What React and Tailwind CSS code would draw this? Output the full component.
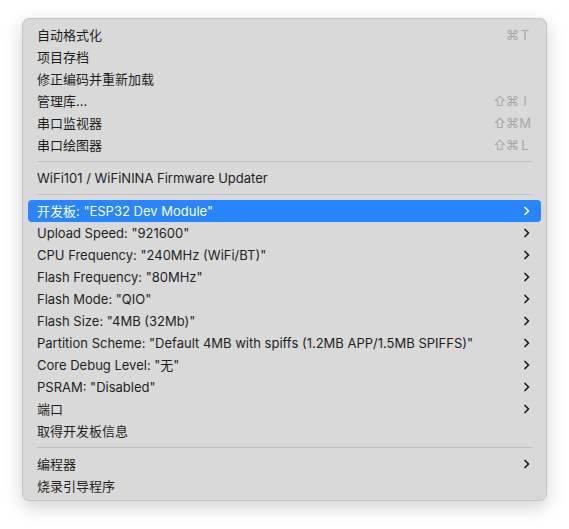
import React from 'react';

const font = { fontFamily: 'Inter, "Noto Sans CJK SC", sans-serif' };

function Chevron({ active }) {
  return (
    <svg width="8" height="10" viewBox="0 0 8 10" className={active ? 'text-white' : 'text-[#1a1a1a]'}>
      <path d="M2 1.5 L5.5 5 L2 8.5" fill="none" stroke="currentColor" strokeWidth="1.7" strokeLinecap="round" strokeLinejoin="round" />
    </svg>
  );
}

function Shortcut({ keys }) {
  return (
    <div className="flex items-center text-[13px] text-[#a6a6a6] leading-none">
      <span className="w-[13px] text-center">{keys.shift ? '⇧' : ''}</span>
      <span className="w-[13px] text-center">⌘</span>
      <span className="w-[12px] text-center">{keys.key}</span>
    </div>
  );
}

function Item({ label, shortcut, submenu, active }) {
  return (
    <div
      className={
        'h-[22px] flex items-center justify-between pl-[9px] pr-[10px] rounded-[4px] ' +
        (active ? 'bg-[#2785ff] text-white' : 'text-[#1f1f1f]')
      }
    >
      <span className="text-[13px] leading-none whitespace-nowrap">{label}</span>
      {shortcut && <Shortcut keys={shortcut} />}
      {submenu && <Chevron active={active} />}
    </div>
  );
}

function Separator() {
  return (
    <div className="h-[11px] flex items-center px-[9px]">
      <div className="h-px w-full bg-[#bfbfbf]" />
    </div>
  );
}

export default function App() {
  const boardItems = [
    ['开发板: "ESP32 Dev Module"', true],
    ['Upload Speed: "921600"'],
    ['CPU Frequency: "240MHz (WiFi/BT)"'],
    ['Flash Frequency: "80MHz"'],
    ['Flash Mode: "QIO"'],
    ['Flash Size: "4MB (32Mb)"'],
    ['Partition Scheme: "Default 4MB with spiffs (1.2MB APP/1.5MB SPIFFS)"'],
    ['Core Debug Level: "无"'],
    ['PSRAM: "Disabled"'],
    ['端口'],
  ];

  return (
    <div className="w-[569px] h-[529px] bg-white pt-[18px] pl-[22px]" style={font}>
      <div className="w-[525px] h-[483px] bg-[#d9d9d9] rounded-[7px] border border-[#c4c4c4] shadow-[0_6px_18px_rgba(0,0,0,0.18)] px-[5px] pt-[5px]">
        <Item label="自动格式化" shortcut={{ key: 'T' }} />
        <Item label="项目存档" />
        <Item label="修正编码并重新加载" />
        <Item label="管理库..." shortcut={{ shift: true, key: 'I' }} />
        <Item label="串口监视器" shortcut={{ shift: true, key: 'M' }} />
        <Item label="串口绘图器" shortcut={{ shift: true, key: 'L' }} />
        <Separator />
        <Item label="WiFi101 / WiFiNINA Firmware Updater" />
        <Separator />
        {boardItems.map(([label, active]) => (
          <Item key={label} label={label} submenu active={active} />
        ))}
        <Item label="取得开发板信息" />
        <Separator />
        <Item label="编程器" submenu />
        <Item label="烧录引导程序" />
      </div>
    </div>
  );
}
